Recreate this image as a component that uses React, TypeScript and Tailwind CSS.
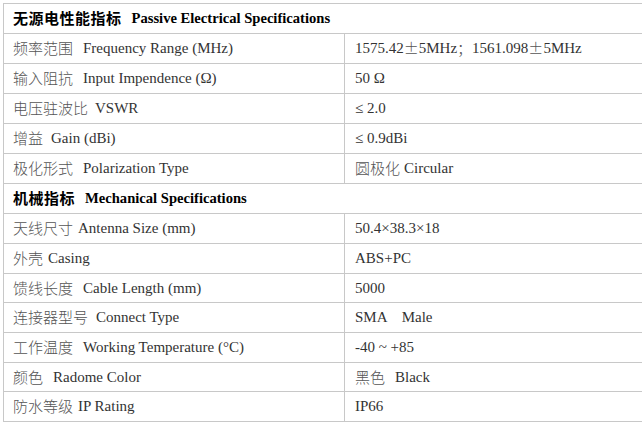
import React from 'react'

type Row = {
    cn: string;
    en: string;
    gap: number;
    value: React.ReactNode;
    h?: string;
}

const serif = "[font-family:'Liberation_Serif','Noto_Sans_CJK_SC',serif]"

const passive: Row[] = [
    { cn: '频率范围', en: 'Frequency Range (MHz)', gap: 10, value: <>1575.42<Cn>±</Cn>5MHz<Cn>；</Cn>1561.098<Cn>±</Cn>5MHz</> },
    { cn: '输入阻抗', en: 'Input Impendence (Ω)', gap: 10, value: '50 Ω' },
    { cn: '电压驻波比', en: 'VSWR', gap: 7, value: '≤ 2.0' },
    { cn: '增益', en: 'Gain (dBi)', gap: 8, value: '≤ 0.9dBi' },
    { cn: '极化形式', en: 'Polarization Type', gap: 10, value: <><Cn>圆极化</Cn><span className="ml-[4px]">Circular</span></> },
]

const mechanical: Row[] = [
    { cn: '天线尺寸', en: 'Antenna Size (mm)', gap: 5, value: '50.4×38.3×18' },
    { cn: '外壳', en: 'Casing', gap: 5, value: 'ABS+PC' },
    { cn: '馈线长度', en: 'Cable Length (mm)', gap: 10, value: '5000', h: 'h-[29px]' },
    { cn: '连接器型号', en: 'Connect Type', gap: 8, value: <span className="whitespace-pre">SMA    Male</span> },
    { cn: '工作温度', en: 'Working Temperature (°C)', gap: 10, value: '-40 ~ +85' },
    { cn: '颜色', en: 'Radome Color', gap: 10, value: <><Cn>黑色</Cn><span className="ml-[10px]">Black</span></>, h: 'h-[29px]' },
    { cn: '防水等级', en: 'IP Rating', gap: 5, value: 'IP66' },
]

function Cn({ children }: { children: React.ReactNode }) {
    return <span className="text-[#555] [font-family:'Noto_Sans_CJK_SC',sans-serif] font-light">{children}</span>
}

const Header = ({ cn, en }: { cn: string; en: string }) => (
    <div className="flex h-[30px] items-center border-b border-[#c8c8c8] pl-[9px]">
        <span className="text-[15px] font-bold tracking-[0.5px] text-black [font-family:'Noto_Sans_CJK_SC',sans-serif]">{cn}</span>
        <span className={`ml-[10px] text-[14.6px] font-bold text-black ${serif}`}>{en}</span>
    </div>
)

const SpecRow = ({ row }: { row: Row }) => (
    <div className={`flex ${row.h ?? 'h-[30px]'} border-b border-[#c8c8c8] text-[15px] text-[#333] ${serif}`}>
        <div className="flex w-[341px] shrink-0 items-center border-r border-[#c8c8c8] pl-[9px]">
            <Cn>{row.cn}</Cn>
            <span style={{ marginLeft: row.gap }}>{row.en}</span>
        </div>
        <div className="flex flex-1 items-center pl-[10px]">{row.value}</div>
    </div>
)

export default function App() {
    return (
        <div className="h-[423px] w-[642px] overflow-hidden bg-white pl-[3px] pt-[3px]">
            <div className="w-[700px] border-l border-t border-[#c8c8c8]">
                <Header cn="无源电性能指标" en="Passive Electrical Specifications" />
                {passive.map((row) => <SpecRow row={row} key={row.en} />)}
                <Header cn="机械指标" en="Mechanical Specifications" />
                {mechanical.map((row) => <SpecRow row={row} key={row.en} />)}
            </div>
        </div>
    )
}
